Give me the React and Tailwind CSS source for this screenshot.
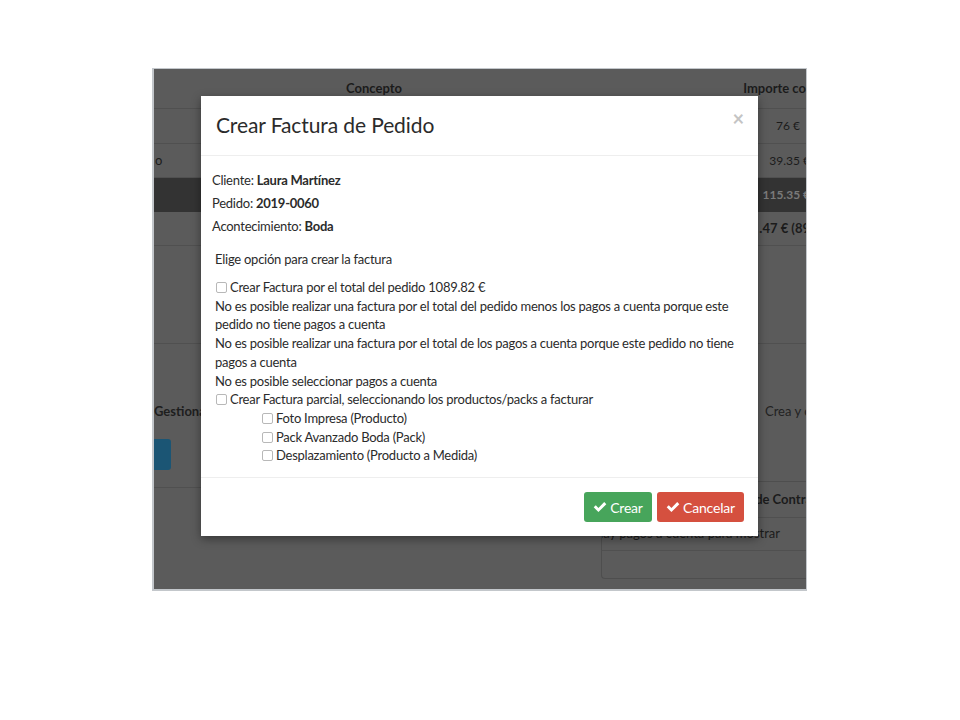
import React from 'react';

const font = { fontFamily: 'Lato, "Noto Sans", sans-serif' };

// little grey square used by the bootstrap-ish checkboxes in the modal
const Box = () => (
  <span className="inline-block w-[11px] h-[11px] border border-[#b8b8b8] rounded-[2px] bg-white mr-[3px] align-[-1px]" />
);

const Check = () => (
  <svg viewBox="0 0 16 16" className="w-[14px] h-[14px] mr-[3px]" fill="currentColor">
    <path d="M0.8 8.4 3.2 6 6.2 9 12.8 2.4 15.2 4.8 6.2 13.8z" />
  </svg>
);

const Backdrop = () => (
  <div className="absolute inset-0 bg-[#5b5b5b] text-[13px] text-[#1b1b1b]">
    {/* table header */}
    <div className="flex h-[40px] items-center border-b border-[#505050]">
      <div className="w-[440px] text-center font-bold">Concepto</div>
      <div className="flex-1 text-right font-bold whitespace-nowrap">Importe co</div>
    </div>
    <div className="flex h-[35px] items-center justify-end pr-[6px] border-b border-[#505050]">
      <span className="text-[12px]">76 €</span>
    </div>
    <div className="flex h-[34px] items-center justify-between border-b border-[#505050]">
      <span className="pl-[1px]">o</span>
      <span className="text-[12px] whitespace-nowrap -mr-[4px]">39.35 €</span>
    </div>
    <div className="flex h-[34px] items-center justify-end bg-[#333333] text-[#7a7a7a] font-bold pr-[2px]">
      <span className="text-[12px] whitespace-nowrap -mr-[6px]">115.35 €</span>
    </div>
    <div className="flex h-[34px] items-center justify-end border-b border-[#505050] font-bold">
      <span className="whitespace-nowrap -mr-[4px]">.47 € (89</span>
    </div>
    <div className="h-[98px] border-b border-[#505050]" />
    <div className="flex h-[144px]">
      <div className="w-[49px] flex flex-col border-b border-[#505050] overflow-hidden">
        <div className="mt-[58px] font-bold whitespace-nowrap text-[#1e1e1e]">Gestiona</div>
        <div className="mt-[17px] w-[17px] h-[31px] bg-[#1b5574] rounded-r-[3px]" />
      </div>
      <div className="flex-1" />
      <div className="w-[45px] overflow-hidden whitespace-nowrap">
        <div className="mt-[58px] text-[#222] pl-[4px]">Crea y c</div>
      </div>
    </div>
    <div className="flex">
      <div className="flex-1" />
      <div className="w-[205px] -mt-[7px] h-[98px] border-l border-b border-t border-[#4e4e4e] rounded-bl-[4px] overflow-hidden">
        <div className="h-[36px] flex items-center justify-end font-bold whitespace-nowrap border-b border-[#505050]">
          <span className="-mr-[6px]">de Contra</span>
        </div>
        <div className="h-[33px] flex items-center justify-end whitespace-nowrap border-b border-[#505050] pr-[26px]">
          <span>No hay pagos a cuenta para mostrar</span>
        </div>
      </div>
    </div>
  </div>
);

const Modal = () => (
  <div className="absolute left-[47px] top-[27px] w-[557px] h-[440px] bg-white flex flex-col text-[#2b2b2b] shadow-[0_3px_9px_rgba(0,0,0,0.4)]">
    <div className="h-[60px] flex items-center justify-between pl-[15px] pr-[14px] border-b border-[#eeeeee]">
      <h4 className="text-[21px] tracking-[-0.1px] -mt-[2px]">Crear Factura de Pedido</h4>
      <span className="text-[20px] leading-none text-[#c4c4c4] font-bold -mt-[16px]">×</span>
    </div>
    <div className="flex-1 pl-[11px] pr-[16px] pt-[15px] text-[13px] tracking-[-0.25px]">
      <p className="h-[23px] leading-[19px]">Cliente: <b>Laura Martínez</b></p>
      <p className="h-[23px] leading-[19px]">Pedido: <b>2019-0060</b></p>
      <p className="h-[23px] leading-[19px]">Acontecimiento: <b>Boda</b></p>
      <p className="mt-[10px] pl-[3px] leading-[19px]">Elige opción para crear la factura</p>
      <div className="mt-[9px] pl-[3px] leading-[18.7px]">
        <div className="pl-[1px]"><Box />Crear Factura por el total del pedido 1089.82 €</div>
        <div>No es posible realizar una factura por el total del pedido menos los pagos a cuenta porque este pedido no tiene pagos a cuenta</div>
        <div>No es posible realizar una factura por el total de los pagos a cuenta porque este pedido no tiene pagos a cuenta</div>
        <div>No es posible seleccionar pagos a cuenta</div>
        <div className="pl-[1px]"><Box />Crear Factura parcial, seleccionando los productos/packs a facturar</div>
        <div className="pl-[47px]">
          <div><Box />Foto Impresa (Producto)</div>
          <div><Box />Pack Avanzado Boda (Pack)</div>
          <div><Box />Desplazamiento (Producto a Medida)</div>
        </div>
      </div>
    </div>
    <div className="h-[59px] flex items-center justify-end gap-[5px] pr-[14px] border-t border-[#eeeeee] text-[14px] tracking-[-0.2px]">
      <button className="h-[30px] w-[68px] flex items-center justify-center bg-[#47a55b] text-white rounded-[3px]">
        <Check />Crear
      </button>
      <button className="h-[30px] w-[87px] flex items-center justify-center bg-[#d5503f] text-white rounded-[3px]">
        <Check />Cancelar
      </button>
    </div>
  </div>
);

export default function App() {
  return (
    <div className="w-[960px] h-[720px] bg-white overflow-hidden" style={font}>
      <div className="ml-[152px] mt-[68px] w-[655px] h-[523px] relative border-l-2 border-b-2 border-r border-t border-[#c3c7cb] overflow-hidden">
        <Backdrop />
        <Modal />
      </div>
    </div>
  );
}
